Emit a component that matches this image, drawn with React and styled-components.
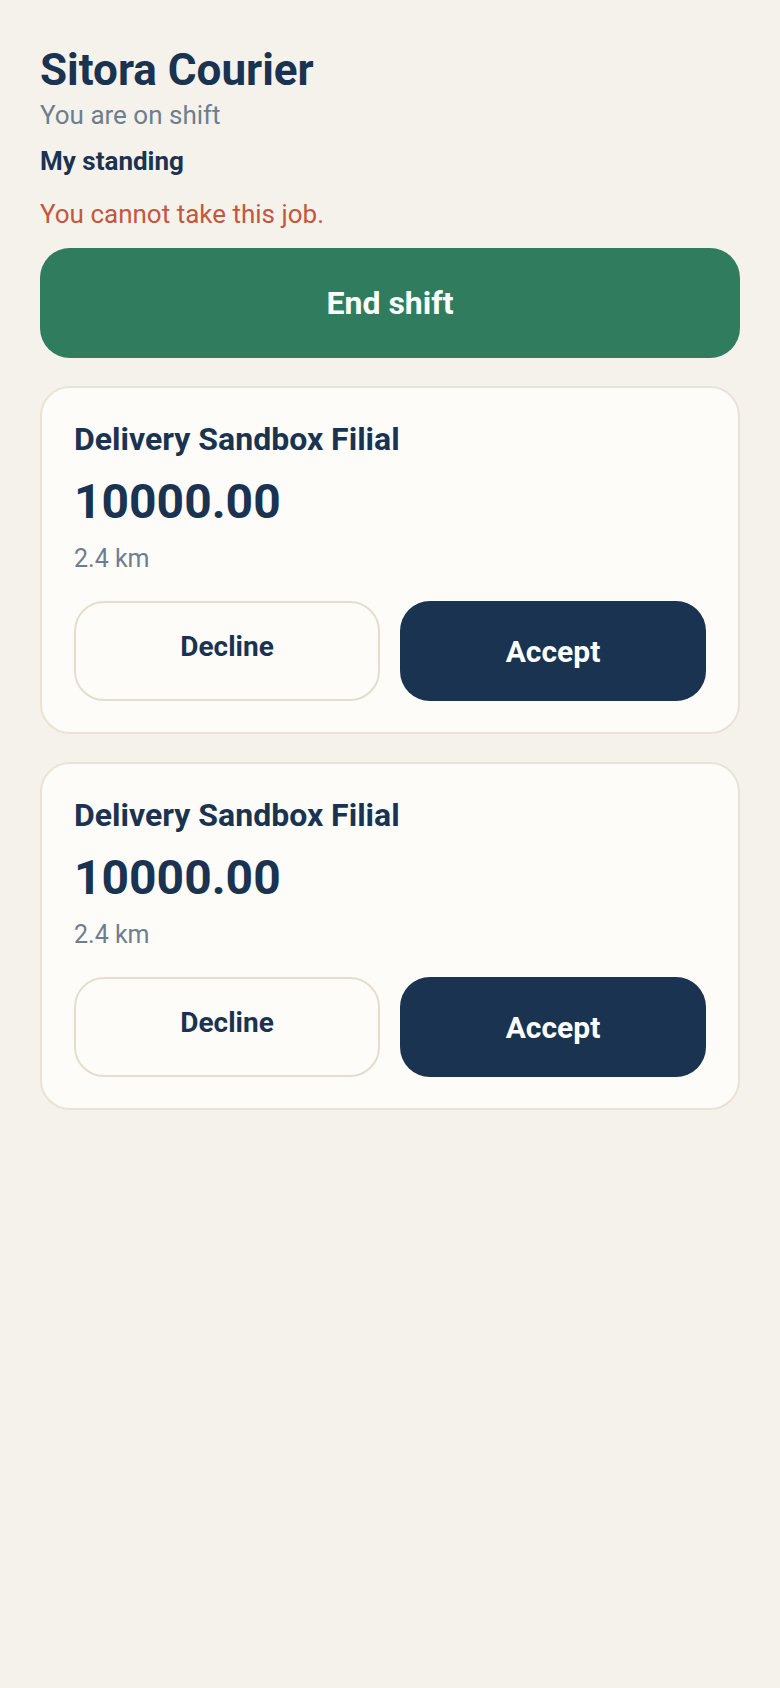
import styled, { createGlobalStyle } from "styled-components";

const GlobalStyle = createGlobalStyle`
  body {
    margin: 0;
    background: #f5f2ec;
    font-family: Roboto, "Liberation Sans", sans-serif;
  }
`;

const jobs = [
  { id: 1, place: "Delivery Sandbox Filial", price: "10000.00", distance: "2.4 km" },
  { id: 2, place: "Delivery Sandbox Filial", price: "10000.00", distance: "2.4 km" },
];

const JobCard = ({ place, price, distance }) => {
  return (
    <Card>
      <Place>{place}</Place>
      <Price>{price}</Price>
      <Distance>{distance}</Distance>
      <Actions>
        <DeclineButton>Decline</DeclineButton>
        <AcceptButton>Accept</AcceptButton>
      </Actions>
    </Card>
  );
};

const App = () => {
  return (
    <>
      <GlobalStyle />
      <Page>
        <Title>Sitora Courier</Title>
        <Status>You are on shift</Status>
        <Standing>My standing</Standing>
        <ErrorText>You cannot take this job.</ErrorText>
        <ShiftButton>End shift</ShiftButton>
        <JobList>
          {jobs.map((job) => (
            <JobCard key={job.id} {...job} />
          ))}
        </JobList>
      </Page>
    </>
  );
};

const Page = styled.div`
  min-height: 1688px;
  box-sizing: border-box;
  padding: 44px 40px 40px;
  display: flex;
  flex-direction: column;
  background: #f5f2ec;
`;
const Title = styled.h1`
  margin: 0;
  font-size: 44px;
  line-height: 1.2;
  font-weight: 700;
  color: #1a3350;
`;
const Status = styled.div`
  margin-top: 3px;
  font-size: 26px;
  line-height: 1.2;
  color: #6e7e8f;
`;
const Standing = styled.div`
  margin-top: 15px;
  font-size: 26px;
  line-height: 1.2;
  font-weight: 700;
  color: #1a3350;
`;
const ErrorText = styled.div`
  margin-top: 22px;
  font-size: 26px;
  line-height: 1.2;
  color: #c4573d;
`;
const ShiftButton = styled.button`
  margin-top: 18px;
  height: 110px;
  border: none;
  border-radius: 30px;
  background: #2f7d5e;
  color: #ffffff;
  font-family: inherit;
  font-size: 32px;
  font-weight: 700;
  cursor: pointer;
`;
const JobList = styled.div`
  margin-top: 28px;
  display: flex;
  flex-direction: column;
  gap: 28px;
`;
const Card = styled.div`
  padding: 32px 32px 31px;
  background: #fdfcf9;
  border: 2px solid #e9e2d5;
  border-radius: 30px;
  display: flex;
  flex-direction: column;
`;
const Place = styled.div`
  font-size: 32px;
  line-height: 1.2;
  font-weight: 700;
  color: #1a3350;
`;
const Price = styled.div`
  margin-top: 14px;
  font-size: 48px;
  line-height: 1.2;
  font-weight: 700;
  color: #1a3350;
`;
const Distance = styled.div`
  margin-top: 14px;
  font-size: 25px;
  line-height: 1.2;
  color: #6e7e8f;
`;
const Actions = styled.div`
  margin-top: 27px;
  display: grid;
  grid-template-columns: 1fr 1fr;
  gap: 20px;
`;
const DeclineButton = styled.button`
  height: 100px;
  padding: 0 0 10px;
  background: #fdfcf9;
  border: 2px solid #e6ddcd;
  border-radius: 30px;
  color: #1a3350;
  font-family: inherit;
  font-size: 28px;
  font-weight: 700;
  cursor: pointer;
`;
const AcceptButton = styled.button`
  height: 100px;
  border: none;
  border-radius: 30px;
  background: #1a3350;
  color: #ffffff;
  font-family: inherit;
  font-size: 30px;
  font-weight: 700;
  cursor: pointer;
`;

export default App;
